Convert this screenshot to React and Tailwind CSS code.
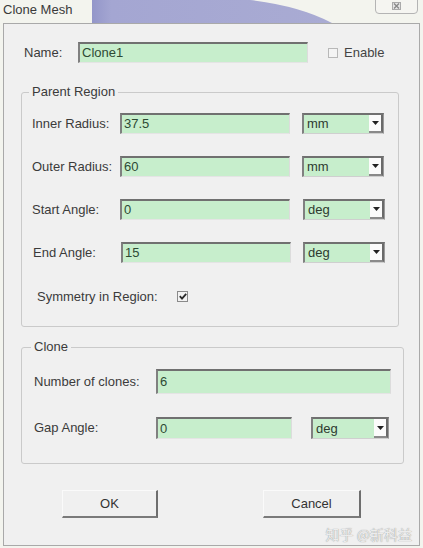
import React from "react";

const font = { fontFamily: '"Liberation Sans", Arial, sans-serif' };

function Field({ w, h = 21, value }) {
  return (
    <div
      className={`flex items-center border-t-2 border-l-2 border-r border-b border-t-[#707070] border-l-[#808080] border-r-[#dcdcdc] border-b-[#e4e4e4] bg-[#c7eecc] pl-[2px] text-[13px] text-[#2e4a34]`}
      style={{ width: w, height: h }}
    >
      {value}
    </div>
  );
}

function Select({ w, h = 21, value }) {
  return (
    <div
      className="flex items-center border-t-2 border-l-2 border-r border-b border-t-[#707070] border-l-[#808080] border-r-[#9a9a9a] border-b-[#cfcfcf] bg-[#c7eecc] text-[13px] text-[#2e3a30]"
      style={{ width: w, height: h }}
    >
      <span className="flex-1 pl-[3px]">{value}</span>
      <div className="flex h-full w-[14px] items-center justify-center border-r-2 border-b-2 border-r-[#6a6a6a] border-b-[#8a8a8a] bg-[#fbfbfb]">
        <svg width="7" height="4" viewBox="0 0 7 4">
          <path d="M0 0 L7 0 L3.5 4 Z" fill="#222" />
        </svg>
      </div>
    </div>
  );
}

function Row({ label, labelW, children, pl, h = 21, className = "" }) {
  return (
    <div className={`flex items-center ${className}`} style={{ paddingLeft: pl, height: h }}>
      <span className="text-[13px] text-[#3b3b3b]" style={{ width: labelW }}>
        {label}
      </span>
      {children}
    </div>
  );
}

export default function App() {
  return (
    <div className="relative h-[548px] w-[423px] overflow-hidden bg-[#f3f4ee]" style={font}>
      {/* title bar */}
      <div className="relative h-[23px]">
        <svg className="absolute left-0 top-0" width="423" height="23" viewBox="0 0 423 23">
          <defs>
            <linearGradient id="g" x1="0" x2="1" y1="0" y2="0">
              <stop offset="0" stopColor="#9396c9" />
              <stop offset="0.08" stopColor="#a4a6d2" />
              <stop offset="1" stopColor="#a9abd3" />
            </linearGradient>
          </defs>
          <path d="M92 0 L250 0 Q300 6 332 23 L92 23 Z" fill="url(#g)" />
        </svg>
        <span className="relative block pl-[3px] pt-[2px] text-[13px] leading-[15px] text-[#3a3a3a]">Clone Mesh</span>
        <div className="absolute right-[5px] top-[-2px] flex h-[16px] w-[43px] items-center justify-center rounded-b-[4px] border border-[#b4b4b4] bg-[#f5f5f1]">
          <svg width="9" height="8" viewBox="0 0 9 8">
            <rect x="0.5" y="0.5" width="8" height="7" fill="#e6e6e6" stroke="#aaa" />
            <path d="M2 1.5 L7 6.5 M7 1.5 L2 6.5" stroke="#888" strokeWidth="1.4" />
          </svg>
        </div>
      </div>

      {/* main panel */}
      <div className="ml-[3px] flex h-[523px] w-[417px] flex-col border border-[#a9a9a9] bg-[#f0f0f0]">
        {/* Name row */}
        <div className="mt-[18px] flex h-[21px] items-center pl-[20px]">
          <span className="w-[54px] text-[13px] text-[#3b3b3b]">Name:</span>
          <Field w={230} value="Clone1" />
          <div className="ml-[20px] h-[10px] w-[10px] border border-[#b8b8b8] bg-[#f4f4f4]" />
          <span className="ml-[6px] text-[13px] text-[#444]">Enable</span>
        </div>

        {/* Parent Region */}
        <fieldset className="ml-[17px] mt-[22px] w-[378px] rounded-[3px] border border-[#cacaca] pb-[19px]">
          <legend className="ml-[7px] px-[3px] text-[13px] leading-[14px] text-[#3b3b3b]">Parent Region</legend>
          <Row label="Inner Radius:" labelW={88} pl={10} className="mt-[14px]">
            <Field w={170} value="37.5" />
            <div className="ml-[12px]">
              <Select w={82} value="mm" />
            </div>
          </Row>
          <Row label="Outer Radius:" labelW={88} pl={10} className="mt-[22px]">
            <Field w={170} value="60" />
            <div className="ml-[12px]">
              <Select w={82} value="mm" />
            </div>
          </Row>
          <Row label="Start Angle:" labelW={88} pl={10} className="mt-[22px]">
            <Field w={170} value="0" />
            <div className="ml-[13px]">
              <Select w={82} value="deg" />
            </div>
          </Row>
          <Row label="End Angle:" labelW={88} pl={11} className="mt-[22px]">
            <Field w={170} value="15" />
            <div className="ml-[12px]">
              <Select w={82} value="deg" />
            </div>
          </Row>
          <Row label="Symmetry in Region:" labelW={140} pl={15} className="mt-[23px]">
            <div className="flex h-[11px] w-[11px] items-center justify-center border border-[#8a8a8a] bg-[#f2f2f2]">
              <svg width="8" height="7" viewBox="0 0 8 7">
                <path d="M0.8 3.2 L3 5.6 L7.2 0.8" stroke="#2a2a2a" strokeWidth="1.8" fill="none" />
              </svg>
            </div>
          </Row>
        </fieldset>

        {/* Clone */}
        <fieldset className="ml-[17px] mt-[13px] w-[383px] rounded-[3px] border border-[#cacaca] pb-[24px]">
          <legend className="ml-[9px] px-[3px] text-[13px] leading-[14px] text-[#3b3b3b]">Clone</legend>
          <Row label="Number of clones:" labelW={122} pl={12} h={25} className="mt-[15px]">
            <Field w={235} h={25} value="6" />
          </Row>
          <Row label="Gap Angle:" labelW={122} pl={12} h={22} className="mt-[23px]">
            <Field w={136} h={22} value="0" />
            <div className="ml-[19px]">
              <Select w={78} h={22} value="deg" />
            </div>
          </Row>
        </fieldset>

        {/* buttons */}
        <div className="mt-[26px] flex pl-[58px]">
          <button className="h-[28px] w-[96px] border-t border-l border-r-2 border-b-2 border-t-[#fafafa] border-l-[#fafafa] border-r-[#6e6e6e] border-b-[#7a7a7a] bg-[#f0f0f0] text-[13px] text-[#333]">
            OK
          </button>
          <button className="ml-[105px] h-[28px] w-[98px] border-t border-l border-r-2 border-b-2 border-t-[#fafafa] border-l-[#fafafa] border-r-[#6e6e6e] border-b-[#7a7a7a] bg-[#f0f0f0] text-[13px] text-[#333]">
            Cancel
          </button>
        </div>
      </div>

      {/* watermark */}
      <span
        className="absolute bottom-[6px] right-[11px] text-[14px] leading-[15px] text-[#ececec] [text-shadow:0_0_1px_#7a7a7a]"
        style={{ fontFamily: '"Noto Sans CJK SC", "Liberation Sans", sans-serif' }}
      >
        知乎 @新科益
      </span>
    </div>
  );
}
